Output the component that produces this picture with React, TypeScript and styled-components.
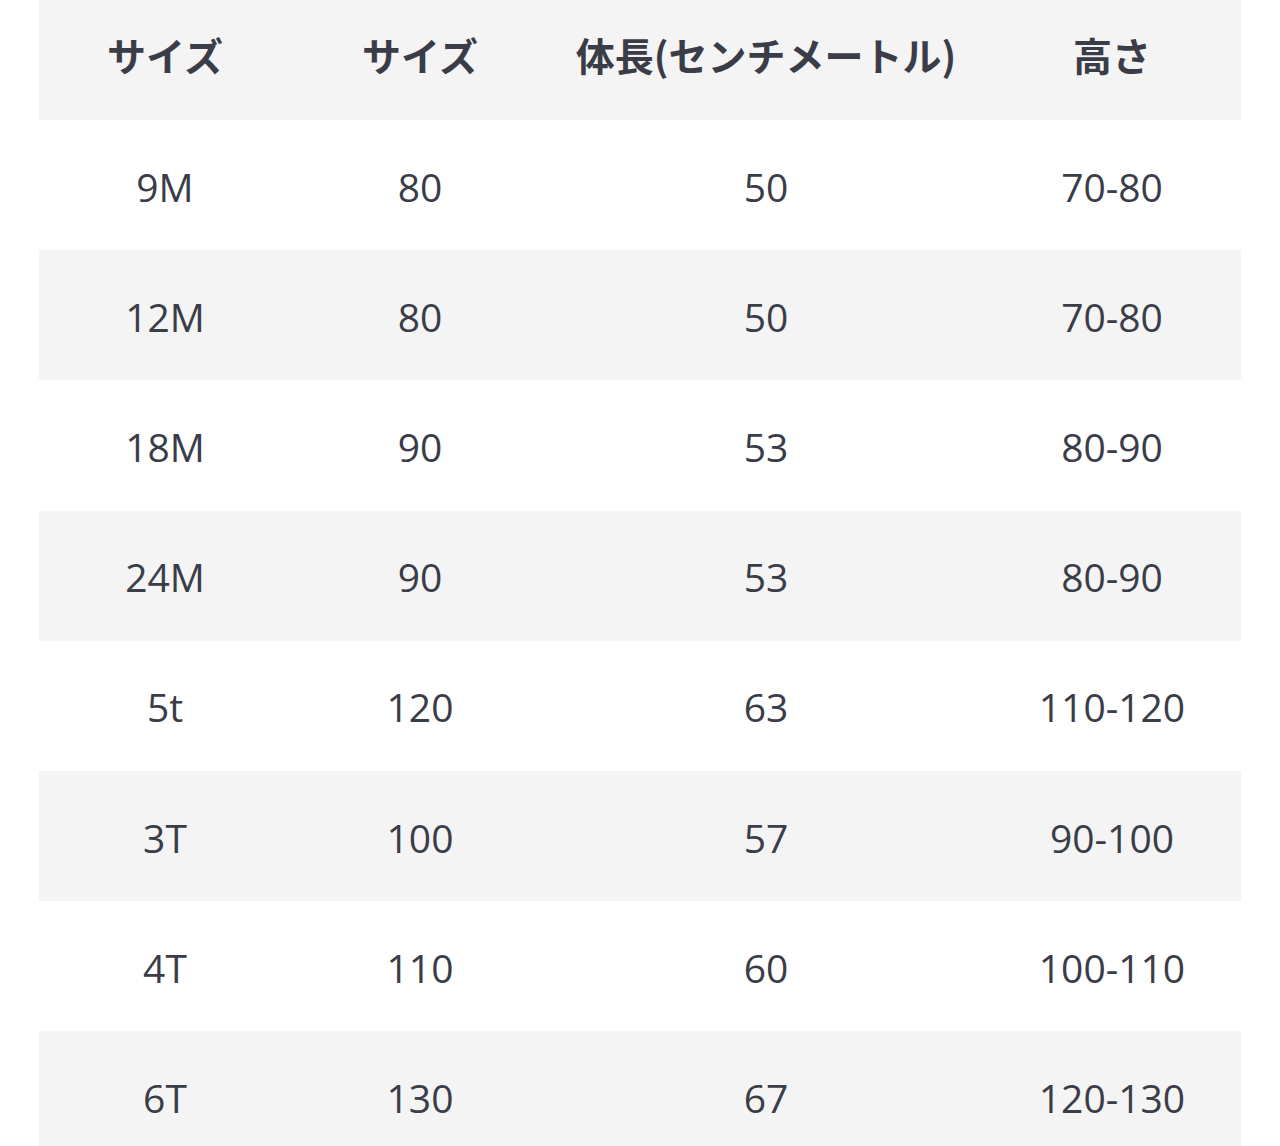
import React from "react";
import styled, { createGlobalStyle } from "styled-components";

const Global = createGlobalStyle`
  html, body { margin: 0; padding: 0; background: #ffffff; }
  body { font-family: "Open Sans", "Noto Sans CJK JP", sans-serif; overflow: hidden; }
`;

const Page = styled.div`
  width: 1280px;
  height: 1146px;
  padding: 0 39px;
  box-sizing: border-box;
  overflow: hidden;
`;

const Table = styled.div`
  display: grid;
  grid-template-columns: 252px 258px 434px 258px;
  width: 1202px;
  color: #3a3d48;
`;

const Row = styled.div<{ $shade: boolean; $head?: boolean }>`
  display: contents;
  & > div {
    background: ${(p) => (p.$shade ? "#f4f4f4" : "#ffffff")};
    height: ${(p) => (p.$head ? "120px" : "130.2px")};
    padding-top: ${(p) => (p.$head ? "0" : "2px")};
    padding-bottom: ${(p) => (p.$head ? "12px" : "0")};
    font-weight: ${(p) => (p.$head ? 700 : 400)};
    font-family: ${(p) =>
      p.$head
        ? `"Noto Sans CJK JP", "Open Sans", sans-serif`
        : `"Open Sans", "Noto Sans CJK JP", sans-serif`};
  }
`;

const Cell = styled.div`
  box-sizing: border-box;
  display: flex;
  align-items: center;
  justify-content: center;
  font-size: 39px;
  line-height: 1;
  white-space: nowrap;
`;

const header = ["サイズ", "サイズ", "体長(センチメートル)", "高さ"];
const rows = [
  ["9M", "80", "50", "70-80"],
  ["12M", "80", "50", "70-80"],
  ["18M", "90", "53", "80-90"],
  ["24M", "90", "53", "80-90"],
  ["5t", "120", "63", "110-120"],
  ["3T", "100", "57", "90-100"],
  ["4T", "110", "60", "100-110"],
  ["6T", "130", "67", "120-130"],
];

export default function App() {
  return (
    <>
      <Global />
      <Page>
        <Table>
          <Row $shade $head>
            {header.map((h, i) => (
              <Cell key={i}>{h}</Cell>
            ))}
          </Row>
          {rows.map((r, ri) => (
            <Row key={ri} $shade={ri % 2 === 1}>
              {r.map((c, ci) => (
                <Cell key={ci}>{c}</Cell>
              ))}
            </Row>
          ))}
        </Table>
      </Page>
    </>
  );
}
